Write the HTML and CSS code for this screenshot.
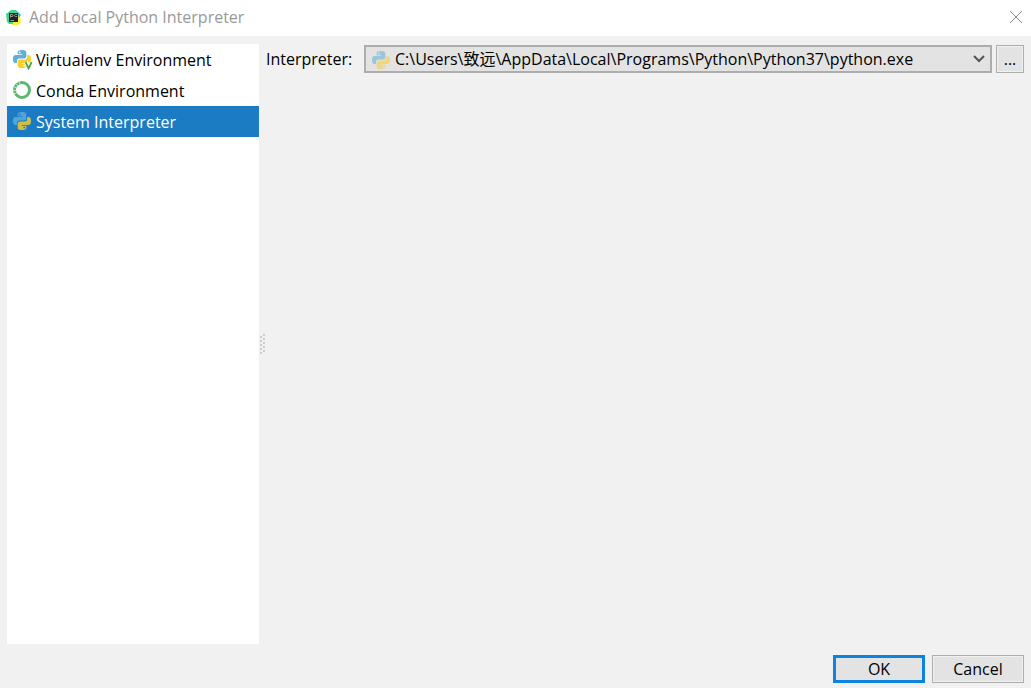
FILE: index.html
```html
<!DOCTYPE html>
<html lang="en">
<head>
<meta charset="utf-8">
<title>Add Local Python Interpreter</title>
<link rel="stylesheet" href="styles.css">
</head>
<body>
<svg class="defs" aria-hidden="true">
  <symbol id="python" viewBox="0 0 18 18">
    <path class="py-top" d="M9 0C6 0 4.600.8 4.600 2.600V4.300H9.200V5H2.800C.8 5 0 6.500 0 9s.8 4 2.600 4H4V11c0-1.500 1-2.500 2.500-2.500H11c1.400 0 2.300-1 2.300-2.300V2.600C13.300.8 12 0 9 0ZM6.700 1.500a.9.9 0 1 1 0 1.800.9.9 0 0 1 0-1.800Z"/>
    <path class="py-bottom" fill-rule="evenodd" d="M9 18c3 0 4.400-.8 4.400-2.600V13.700H8.800V13h6.400c2 0 2.800-1.500 2.800-4s-.8-4-2.600-4H14.200V7c0 1.500-1 2.500-2.500 2.500H7C5.600 9.500 4.700 10.500 4.700 11.800v3.600C4.700 17.200 6 18 9 18ZM11.300 16.500a.9.9 0 1 1 0-1.800.9.9 0 0 1 0 1.800Z"/>
  </symbol>
</svg>
<div class="dialog">
  <header class="titlebar">
    <svg class="app-icon" viewBox="0 0 16 16" aria-hidden="true">
      <path fill="#3bd992" d="M0 5 5 1l5 0 3 3-3 11-7 0-2-2Z"/>
      <path fill="#f7ef3e" d="m12 6 2 2 1 6-3 2-6 0 1-3Z"/>
      <path fill="#14bcf2" d="m12 3 3 3-2 3Z"/>
      <path fill="#222" d="M3 4h9v9H3z"/>
      <path fill="none" stroke="#999" d="M4.500 8.500V5.500H6a1 1 0 0 1 0 2H4.500M11 5.500H9.500a1 1 0 0 0 0 2H11M4.500 11.500H8"/>
    </svg>
    <h1 class="title">Add Local Python Interpreter</h1>
    <button class="close" type="button" aria-label="Close">
      <svg class="close-icon" viewBox="0 0 12 12" aria-hidden="true"><path d="m0 0 12 12M12 0 0 12"/></svg>
    </button>
  </header>
  <main class="content">
    <nav class="types" aria-label="Interpreter type">
      <button class="type" type="button">
        <svg class="icon" viewBox="0 0 20 20" aria-hidden="true">
          <use href="#python" width="18" height="18"/>
          <path fill="none" stroke="#fff" stroke-width="4" d="m13 12 3 7 3-7"/>
          <path fill="none" stroke="#4da64b" stroke-width="1.800" d="m12.600 12 3 6.500 3-6.500"/>
        </svg>
        Virtualenv Environment
      </button>
      <button class="type" type="button">
        <svg class="icon" viewBox="0 0 20 20" aria-hidden="true">
          <circle class="ring" cx="9" cy="9" r="7.500"/>
          <path class="ring-gaps" d="m1 6 3 1M0 9.500h3M1 13l3-1.500M3 3l2 2M6 1l1 2.500"/>
        </svg>
        Conda Environment
      </button>
      <button class="type selected" type="button" aria-current="true">
        <svg class="icon" viewBox="0 0 20 20" aria-hidden="true"><use href="#python" width="18" height="18"/></svg>
        System Interpreter
      </button>
    </nav>
    <div class="splitter" aria-hidden="true">
      <svg class="grip" viewBox="0 0 6 20"><path d="M2 2v18M5 0v18"/></svg>
    </div>
    <section class="settings">
      <label class="label" for="interpreter">Interpreter:</label>
      <div class="combo">
        <svg class="combo-icon" viewBox="0 0 18 18" aria-hidden="true"><use href="#python" width="18" height="18"/></svg>
        <select class="select" id="interpreter">
          <option>C:\Users\致远\AppData\Local\Programs\Python\Python37\python.exe</option>
        </select>
        <svg class="chevron" viewBox="0 0 12 8" aria-hidden="true"><path d="m1 1 5 5 5-5"/></svg>
      </div>
      <button class="button browse" type="button" aria-label="Browse">...</button>
    </section>
  </main>
  <footer class="actions">
    <button class="button primary" type="button">OK</button>
    <button class="button" type="button">Cancel</button>
  </footer>
</div>
</body>
</html>
```
FILE: styles.css
```css
* { box-sizing: border-box; }

body {
  margin: 0;
  background: #f1f1f1;
  color: #000;
}

body, button, select {
  font: 16px/24px "Open Sans", "Noto Sans CJK SC", sans-serif;
}

.defs { position: absolute; width: 0; height: 0; }
.py-top { fill: #5fb0d8; }
.py-bottom { fill: #fcce2e; }

.dialog {
  display: flex;
  flex-direction: column;
  min-height: 100vh;
}

.titlebar {
  display: flex;
  align-items: center;
  gap: 7px;
  height: 36px;
  padding: 0 8px 2px 6px;
  background: #fff;
}

.app-icon { width: 16px; height: 16px; }

.title {
  flex: 1;
  margin: 0;
  font-size: 16px;
  font-weight: 400;
  color: #999;
}

.close {
  display: flex;
  padding: 1px;
  border: 0;
  background: none;
}

.close-icon {
  width: 12px;
  height: 12px;
  overflow: visible;
  fill: none;
  stroke: #888;
}

.content {
  display: flex;
  flex: 1;
  padding: 8px 7px 0;
}

.types {
  flex: none;
  width: 252px;
  background: #fff;
}

.type {
  display: flex;
  align-items: center;
  gap: 3px;
  width: 100%;
  height: 31px;
  padding: 0 6px;
  border: 0;
  background: none;
  color: #000;
  text-align: left;
  white-space: nowrap;
}

.type.selected { background: #1b7cc4; color: #fff; }
.selected .py-top { fill: #4a9fd0; }
.selected .icon { opacity: 0.8; }

.icon { width: 20px; height: 20px; }

.ring { fill: none; stroke: #5cb86c; stroke-width: 3; }

.ring-gaps { fill: none; stroke: #fff; stroke-width: 0.6; }

.splitter {
  display: flex;
  align-items: center;
  width: 7px;
}

.grip {
  width: 6px;
  height: 20px;
  fill: none;
  stroke: #ccc;
  stroke-width: 2;
  stroke-dasharray: 2;
}

.settings {
  display: flex;
  flex: 1;
  align-items: flex-start;
  padding-top: 1px;
}

.label { width: 98px; line-height: 28px; }

.combo {
  position: relative;
  flex: 1;
  margin-right: 4px;
}

.select {
  display: block;
  width: 100%;
  height: 28px;
  padding: 0 32px 0 29px;
  border: 2px solid #adadad;
  border-radius: 0;
  appearance: none;
  background: #e3e3e3;
  color: #000;
}

.combo-icon {
  position: absolute;
  top: 6px;
  left: 8px;
  width: 18px;
  height: 18px;
  opacity: 0.55;
}

.chevron {
  position: absolute;
  top: 10px;
  right: 7px;
  width: 12px;
  height: 8px;
  fill: none;
  stroke: #555;
  stroke-width: 2;
}

.button {
  width: 92px;
  height: 28px;
  padding: 0;
  border: 1px solid #adadad;
  background: #e3e3e3;
  box-shadow: inset 0 0 0 1px #f1f1f1;
  color: #000;
}

.browse { width: 28px; }

.primary {
  border: 3px solid #0a84e0;
  box-shadow: none;
  line-height: 22px;
}

.actions {
  display: flex;
  justify-content: flex-end;
  gap: 7px;
  padding: 11px 7px 5px;
}
```
